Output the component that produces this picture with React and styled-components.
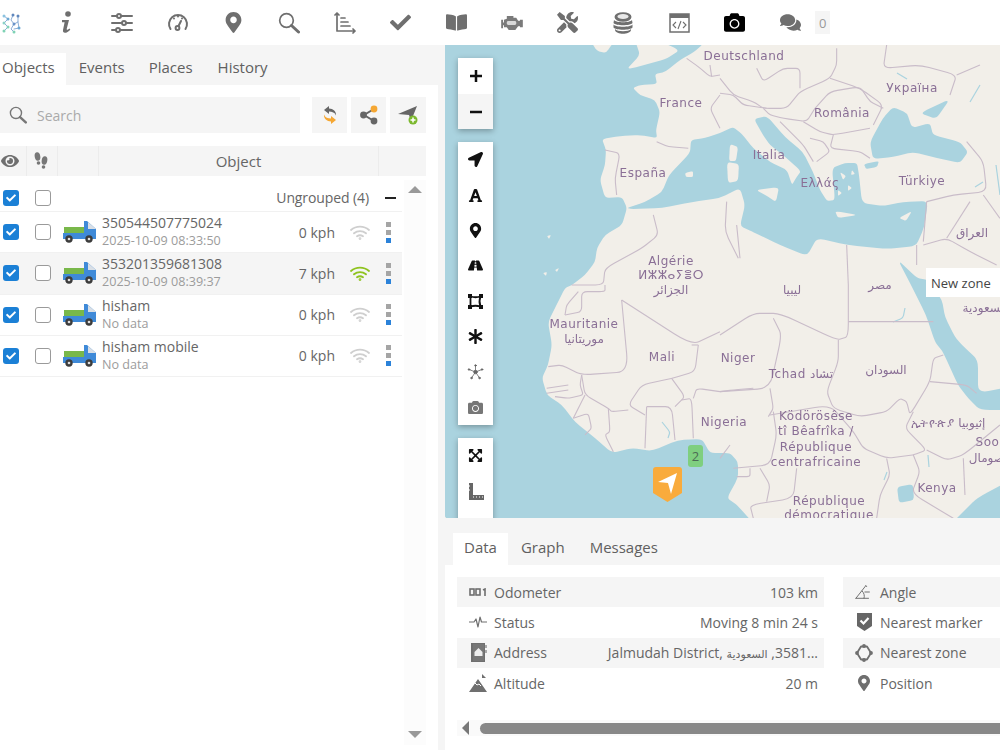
import React from 'react';
import styled, { createGlobalStyle } from 'styled-components';
import {
  FaAsterisk, FaBookOpen, FaCamera, FaCheck, FaComments, FaExpandArrowsAlt, FaEye, FaFont,
  FaLocationArrow, FaMapMarkerAlt, FaRoad, FaTools,
} from 'react-icons/fa';

const GlobalStyle = createGlobalStyle`
  html, body {
    margin: 0;
    height: 750px;
    overflow: hidden;
    background: #fff;
    font-family: "Open Sans", "DejaVu Sans", sans-serif;
    color: #666;
  }
`;

const Toolbar = styled.div`
  height: 45px;
  margin-left: -17px;
  display: flex;
  align-items: center;
  background: #fff;
`;
const ToolIcon = styled.div`
  width: 55.7px;
  height: 45px;
  flex: none;
  display: flex;
  align-items: center;
  justify-content: center;
  color: ${({ $color }) => $color || '#6f6f6f'};
  font-size: 21px;
`;
const Counter = styled.div`
  width: 15px;
  height: 23px;
  margin-left: -3px;
  background: #f5f5f5;
  font-size: 13px;
  color: #999;
  display: flex;
  align-items: center;
  justify-content: center;
`;

const Main = styled.div`
  height: 705px;
  display: flex;
  background: #f5f5f5;
`;
const LeftPanel = styled.div`
  width: 438px;
  margin-right: 7px;
  flex: none;
  background: #fff;
  display: flex;
  flex-direction: column;
  position: relative;
`;
const RightPanel = styled.div`
  width: 555px;
  flex: none;
  display: flex;
  flex-direction: column;
  overflow: hidden;
`;

const TabBar = styled.div`
  display: flex;
  align-items: flex-end;
  background: #f5f5f5;
  height: ${({ $height }) => $height}px;
  padding-left: ${({ $inset }) => $inset}px;
  flex: none;
`;
const Tab = styled.div`
  height: 32px;
  box-sizing: border-box;
  padding: 0 ${({ $pad }) => $pad}px 4px ${({ $pad }) => $pad}px;
  padding-right: ${({ $right, $pad }) => $right ?? $pad}px;
  display: flex;
  align-items: center;
  font-size: 15px;
  color: #606060;
  background: ${({ $active }) => ($active ? '#fff' : 'transparent')};
`;

const SearchRow = styled.div`
  display: flex;
  margin-top: 12px;
  width: 426px;
  height: 36px;
`;
const SearchBox = styled.div`
  width: 300px;
  margin-right: 12px;
  background: #f5f5f5;
  display: flex;
  align-items: center;
  padding-left: 9px;
  box-sizing: border-box;
  font-size: 14px;
  color: #aaa;
  gap: 10px;
`;
const SquareButton = styled.div`
  width: 35px;
  margin-right: 4px;
  background: #f5f5f5;
  display: flex;
  align-items: center;
  justify-content: center;
  &:last-child { margin-right: 0; width: 36px; }
`;

const TableHead = styled.div`
  margin-top: 13px;
  width: 426px;
  height: 30px;
  background: #f5f5f5;
  display: grid;
  grid-template-columns: 27px 31px 41px 280px 47px;
  font-size: 15px;
  color: #666;
`;
const HeadCell = styled.div`
  display: flex;
  align-items: center;
  justify-content: center;
  padding-right: ${({ $nudge }) => $nudge || 0}px;
  border-right: ${({ $last }) => ($last ? 'none' : '1px solid #ececec')};
`;

const ListArea = styled.div`
  position: relative;
  flex: 1;
  width: 426px;
  margin-top: 4px;
`;
const ScrollTrack = styled.div`
  position: absolute;
  right: 0;
  top: 0;
  bottom: 5px;
  width: 22px;
  background: #fcfcfc;
`;
const ArrowGlyph = styled.div`
  position: absolute;
  left: 4px;
  ${({ $down }) => ($down ? 'bottom: 7px;' : 'top: 6px;')}
  width: 0;
  height: 0;
  border-left: 7px solid transparent;
  border-right: 7px solid transparent;
  ${({ $down }) => ($down ? 'border-top: 7px solid #999;' : 'border-bottom: 7px solid #999;')}
`;

const Row = styled.div`
  width: 402px;
  height: ${({ $group }) => ($group ? 32 : 41.25)}px;
  padding-top: ${({ $group }) => ($group ? 4 : 0)}px;
  box-sizing: border-box;
  display: flex;
  align-items: center;
  background: ${({ $shade }) => ($shade ? '#f5f5f5' : '#fff')};
  border-bottom: 1px solid #f1f1f1;
`;
const Check = styled.div`
  width: 16px;
  height: 16px;
  margin-left: ${({ $off }) => ($off ? 16 : 3)}px;
  box-sizing: border-box;
  border-radius: 3px;
  flex: none;
  display: flex;
  align-items: center;
  justify-content: center;
  font-size: 10px;
  color: #fff;
  background: ${({ $off }) => ($off ? '#fff' : '#1b80d6')};
  border: ${({ $off }) => ($off ? '1.5px solid #9a9a9a' : 'none')};
`;
const TruckWrap = styled.div`
  width: 33px;
  height: 22px;
  margin-left: 12px;
  flex: none;
`;
const NameBlock = styled.div`
  margin-left: 6px;
  width: 170px;
  flex: none;
`;
const Name = styled.div`
  font-size: 14px;
  line-height: 17px;
  color: #666;
`;
const Sub = styled.div`
  font-size: 12.6px;
  line-height: 19px;
  color: #9c9c9c;
`;
const Speed = styled.div`
  width: 63px;
  text-align: right;
  font-size: 14px;
  color: #666;
  flex: none;
`;
const WifiWrap = styled.div`
  width: 20px;
  margin-left: 15px;
  flex: none;
  display: flex;
`;
const Dots = styled.div`
  margin-left: 16px;
  display: flex;
  flex-direction: column;
  gap: 3px;
`;
const Dot = styled.span`
  width: 5px;
  height: 5px;
  background: ${({ $blue }) => ($blue ? '#2b82d9' : '#a5a5a5')};
`;
const GroupLabel = styled.div`
  margin-left: auto;
  font-size: 14px;
  color: #666;
  letter-spacing: -0.1px;
`;
const Collapse = styled.div`
  width: 11px;
  height: 2px;
  background: #222;
  margin: 0 6px 0 16px;
`;

const MapArea = styled.div`
  height: 473px;
  flex: none;
  position: relative;
  overflow: hidden;
  background: #aad3df;
`;
const MapSvg = styled.svg`
  display: block;
  width: 555px;
  height: 473px;
  filter: blur(0.45px);
`;
const ControlStack = styled.div`
  position: absolute;
  left: 13px;
  top: 13px;
  display: flex;
  flex-direction: column;
  gap: 13px;
`;
const ControlBox = styled.div`
  width: 35px;
  background: #fff;
  box-shadow: 0 2px 6px rgba(0, 0, 0, 0.3);
  display: flex;
  flex-direction: column;
`;
const ControlBtn = styled.div`
  height: ${({ $h }) => $h || 35.4}px;
  display: flex;
  align-items: center;
  justify-content: center;
  font-size: 15px;
  color: ${({ $muted }) => ($muted ? '#777' : '#111')};
  background: ${({ $shade }) => ($shade ? '#f5f5f5' : '#fff')};
`;
const Tooltip = styled.div`
  position: absolute;
  left: 481px;
  top: 223px;
  width: 80px;
  height: 29px;
  padding-left: 5px;
  background: #fff;
  font-size: 13px;
  color: #444;
  line-height: 30px;
`;
const ClusterBadge = styled.div`
  position: absolute;
  left: 243px;
  top: 400px;
  width: 15px;
  height: 22px;
  border-radius: 3px;
  background: #7fcf7f;
  color: #4c6b55;
  font-size: 13px;
  display: flex;
  align-items: center;
  justify-content: center;
`;
const Marker = styled.svg`
  position: absolute;
  left: 208px;
  top: 422px;
`;

const Details = styled.div`
  flex: 1;
  background: #fff;
  position: relative;
  overflow: hidden;
`;
const DataColumns = styled.div`
  display: flex;
  gap: 19px;
  padding: 12px 0 0 12px;
  width: 800px;
`;
const DataColumn = styled.div`
  width: 367px;
  flex: none;
`;
const DataRow = styled.div`
  height: 30.3px;
  display: flex;
  align-items: center;
  padding: 0 6px 0 12px;
  font-size: 14px;
  color: #666;
  background: ${({ $shade }) => ($shade ? '#f5f5f5' : '#fff')};
`;
const DataIcon = styled.div`
  width: 18px;
  margin-right: 7px;
  display: flex;
  justify-content: center;
  align-items: center;
  font-size: 16px;
  color: #6f6f6f;
  flex: none;
`;
const DataValue = styled.div`
  margin-left: auto;
  white-space: nowrap;
`;
const ArabicPart = styled.bdi`
  font-size: 11px;
`;
const HScroll = styled.div`
  position: absolute;
  left: 12px;
  right: 0;
  top: 202px;
  height: 16px;
  display: flex;
  align-items: center;
  background: #fafafa;
`;
const LeftArrow = styled.div`
  width: 0;
  height: 0;
  margin-left: 5px;
  border-top: 7px solid transparent;
  border-bottom: 7px solid transparent;
  border-right: 7px solid #777;
`;
const Thumb = styled.div`
  flex: 1;
  height: 11px;
  margin-left: 11px;
  border-radius: 6px 0 0 6px;
  background: #888;
`;

const Stroke = ({ w = 22, h = 22, vb = '0 0 22 22', sw = 2, color = '#6f6f6f', children }) => (
  <svg width={w} height={h} viewBox={vb} fill="none" stroke={color} strokeWidth={sw} strokeLinecap="round" strokeLinejoin="round">
    {children}
  </svg>
);

const NetworkLogo = () => (
  <Stroke w={22} h={22} sw={0.9} color="#7fa6d2">
    <path d="M4 4l4 3-4 4 4 4-4 4M13 3l-2 5 3 4-3 5 3 3M18 4v6l-4 2M18 10l1 6-5 1" />
    <g stroke="none">
      <circle cx="4" cy="4" r="1.500" fill="#8cc3e0" /><circle cx="8" cy="7" r="1.500" fill="#6aa6d2" />
      <circle cx="4" cy="11" r="1.500" fill="#8cd0c8" /><circle cx="8" cy="15" r="1.500" fill="#7fcfb8" />
      <circle cx="4" cy="19" r="1.500" fill="#80d2b5" /><circle cx="13" cy="3" r="1.500" fill="#5f87bd" />
      <circle cx="14" cy="12" r="1.500" fill="#6a93c8" /><circle cx="18" cy="4" r="1.500" fill="#5f87bd" />
      <circle cx="19" cy="16" r="1.500" fill="#6aa6d2" /><circle cx="14" cy="20" r="1.500" fill="#80d2b5" />
    </g>
  </Stroke>
);
const ItalicInfo = () => (
  <svg width="13" height="23" viewBox="0 0 13 23" fill="#6f6f6f">
    <circle cx="8" cy="3" r="2.800" />
    <path d="M2 9h7l-2.300 9c-.2 1 .8 1.200 2.800-.5l.8 1.200C7 22.500 2.300 23 3 19l1.600-7.700H2z" />
  </svg>
);
const Sliders = () => (
  <Stroke sw={2}>
    <path d="M1 4h5M10 4h11M1 11h10M15 11h6M1 18h4M9 18h12" />
    <circle cx="8" cy="4" r="2" /><circle cx="13" cy="11" r="2" /><circle cx="7" cy="18" r="2" />
  </Stroke>
);
const Gauge = () => (
  <Stroke sw={2}>
    <path d="M3.500 17a9 9 0 1 1 15 0" />
    <path d="M7 6.500v0M15 6.500v0M11 4.500v0" />
    <circle cx="10.500" cy="16" r="1.900" />
    <path d="M11.500 14l2.500-5" />
  </Stroke>
);
const Magnifier = ({ size = 22, color = '#6f6f6f' }) => (
  <Stroke w={size} h={size} color={color} sw={1.700}>
    <circle cx="8.500" cy="8.500" r="6.800" />
    <path d="M13.500 13.500l7 6.500" strokeWidth="3" />
  </Stroke>
);
const AxisChart = () => (
  <Stroke sw={1.700}>
    <path d="M3 1v18h18M1 3l2-2 2 2M19 17l2 2-2 2M7 6h4M7 10h7M7 14h9" />
  </Stroke>
);
const Engine = () => (
  <svg width="22" height="16" viewBox="0 0 23 17">
    <path fill="#7a7a7a" d="M6 1h7v2h3l2 3h2V5h3v8h-3v-1h-2l-3 4H8l-2-3H3v-2H2v3H0V5h2v3h1V5l3-1z" />
    <rect x="6" y="6.500" width="10" height="4" rx="1.500" fill="#d8d8d8" />
  </svg>
);
const Coins = () => (
  <svg width="20" height="22" viewBox="0 0 20 22">
    <ellipse cx="10" cy="5" rx="8.500" ry="4.800" fill="#6f6f6f" />
    <ellipse cx="10" cy="4.500" rx="5.500" ry="2.600" fill="#e8e8e8" />
    <path fill="#6f6f6f" d="M1 8c2 3 16 3 18 0l.5 3c-2 3-17 3-19 0zM.5 12.500c2 3 17 3 19 0v3c-2 3-17 3-19 0zM2 17c2 3 14 3 16 0v1c-1 5-15 5-16 0z" />
  </svg>
);
const CodeWindow = () => (
  <svg width="21" height="20" viewBox="0 0 21 20">
    <rect x="1" y="1" width="19" height="18" fill="#fff" stroke="#6f6f6f" strokeWidth="1.500" />
    <rect x="1" y="1" width="19" height="4" fill="#6f6f6f" />
    <path d="M7 9l-3 3 3 3M14 9l3 3-3 3M12 8l-3 8" fill="none" stroke="#6f6f6f" strokeWidth="1.100" />
  </svg>
);
const SyncIcon = () => (
  <svg width="18" height="20" viewBox="0 0 18 20">
    <path d="M8 1L3 5l5 4V6.500c3 0 6 1 7 4 .5-4-3-7-7-7z" fill="#666" />
    <path d="M10 19l5-4-5-4v2.500c-3 0-6-1-7-4-.5 4 3 7 7 7z" fill="#f5a733" />
  </svg>
);
const ShareIcon = () => (
  <svg width="20" height="20" viewBox="0 0 20 20">
    <path d="M15 4L5 10l10 6" fill="none" stroke="#666" strokeWidth="2" />
    <circle cx="15" cy="4" r="3.400" fill="#f5a733" />
    <circle cx="4.500" cy="10" r="3.400" fill="#666" />
    <circle cx="15" cy="16" r="3.400" fill="#666" />
  </svg>
);
const AddPlane = () => (
  <svg width="21" height="20" viewBox="0 0 21 20">
    <path d="M0 9L19 1l-6 15-2-6z" fill="#666" />
    <circle cx="15" cy="15" r="4.500" fill="#7cb82f" />
    <path d="M12.500 15h5M15 12.500v5" stroke="#fff" strokeWidth="1.500" />
  </svg>
);
const FootPrints = () => (
  <svg width="16" height="21" viewBox="0 0 16 20" fill="#777">
    <ellipse cx="4.500" cy="5" rx="2.800" ry="4.200" transform="rotate(-10 4.500 5)" />
    <ellipse cx="5.500" cy="11.500" rx="1.800" ry="1.700" />
    <ellipse cx="11.500" cy="9" rx="2.800" ry="4.200" transform="rotate(10 11.500 9)" />
    <ellipse cx="10.500" cy="15.500" rx="1.800" ry="1.800" />
  </svg>
);
const Truck = () => (
  <svg width="33" height="22" viewBox="0 0 33 22">
    <rect x="1" y="6" width="20" height="7" fill="#79b84a" />
    <path d="M0 12h21V0h3l9 8v10H0z" fill="#3f8ad8" />
    <path d="M25 1l8 7h-8z" fill="#d9dfe6" />
    <circle cx="6" cy="18" r="3.700" fill="#3c3c3c" /><circle cx="6" cy="18" r="1.300" fill="#ddd" />
    <circle cx="26" cy="18" r="3.700" fill="#3c3c3c" /><circle cx="26" cy="18" r="1.300" fill="#ddd" />
  </svg>
);
const Wifi = ({ on }) => (
  <Stroke w={20} h={15} vb="0 0 20 15" color={on ? '#8fc31f' : '#cfcfcf'} sw={1.800}>
    <path d="M1 5c5-4.500 13-4.500 18 0M4 8.300c3.500-3 8.500-3 12 0M7 11.300c1.800-1.300 4.200-1.300 6 0" />
    <circle cx="10" cy="13.600" r=".5" />
  </Stroke>
);

const ZoneIcon = () => (
  <svg width="15" height="15" viewBox="0 0 15 15">
    <path d="M2.500 2.500Q7.500 4 12.500 2.500Q10.500 7.500 12.500 12.500Q7.500 11 2.500 12.500z" fill="none" stroke="#111" strokeWidth="1.800" />
    <path d="M0 0h4v4H0zM11 0h4v4h-4zM0 11h4v4H0zM11 11h4v4h-4z" fill="#111" />
  </svg>
);
const ClusterIcon = () => (
  <Stroke w={17} h={16} vb="0 0 17 16" color="#666" sw={0.800}>
    <path d="M8.500 8V1.500M8.500 8L2 5.500M8.500 8L15 5.500M8.500 8l-4 6M8.500 8l4 6" />
    <g fill="#666">
      <circle cx="8.500" cy="8" r="1.800" /><circle cx="8.500" cy="1.500" r=".8" /><circle cx="2" cy="5.500" r=".8" />
      <circle cx="15" cy="5.500" r=".8" /><circle cx="4.500" cy="14" r=".8" /><circle cx="12.500" cy="14" r=".8" />
    </g>
  </Stroke>
);
const RulerIcon = () => (
  <svg width="16" height="17" viewBox="0 0 16 17">
    <path d="M1 0h4v12h11v5H1z" fill="#666" />
    <path d="M5 14h10M1 3h3M1 7h3" stroke="#fff" strokeWidth="1" strokeDasharray="1 2" />
  </svg>
);

const DigitsIcon = () => (
  <svg width="18" height="8" viewBox="0 0 18 8" fill="none" stroke="#6f6f6f" strokeWidth="1.600">
    <rect x="1" y="1" width="4" height="6" /><rect x="7" y="1" width="4" height="6" /><path d="M14 2l2-1v7" />
  </svg>
);
const PulseIcon = () => (
  <Stroke w={18} h={14} vb="0 0 18 14" sw={1.200}>
    <path d="M0 7h5l2-3 2 8 2-10 1.500 5H18" />
  </Stroke>
);
const AddressIcon = () => (
  <svg width="17" height="21" viewBox="0 0 17 21">
    <rect x="1" y="1" width="14" height="19" fill="#6f6f6f" />
    <rect x="3" y="2" width="11" height="17" fill="#777" />
    <path d="M8.500 6l4 4v4h-8v-4z" fill="#eee" />
    <path d="M15 3h2v3h-2zM15 8h2v3h-2z" fill="#aaa" />
  </svg>
);
const PeakIcon = () => (
  <svg width="18" height="18" viewBox="0 0 18 18">
    <path d="M9 5L0 18h18zM13 0v4h4z" fill="#6f6f6f" />
    <path d="M6 9l2 2 2-1 2 2" stroke="#fff" fill="none" />
  </svg>
);
const AngleIcon = () => (
  <Stroke w={20} h={18} vb="0 0 20 18" sw={1.100}>
    <path d="M1 16L12 2M1 16h14M8 8c2 2 3 5 2 8M12 2l1 1M11 9h5" />
  </Stroke>
);
const ShieldCheck = () => (
  <svg width="15" height="18" viewBox="0 0 15 18">
    <path d="M0 0h15v13l-7.500 5L0 13z" fill="#666" />
    <path d="M3.500 7.500l3 3 5-5.500" fill="none" stroke="#fff" strokeWidth="2.200" />
  </svg>
);
const ZoneRing = () => (
  <Stroke w={18} h={18} vb="0 0 18 18" sw={1.800}>
    <path d="M6 2.500h6l4 6.500-4 6.500H6L2 9z" />
    <g fill="#6f6f6f"><circle cx="9" cy="2" r="1" /><circle cx="9" cy="16" r="1" /><circle cx="2" cy="9" r="1" /><circle cx="16" cy="9" r="1" /></g>
  </Stroke>
);

/* rounds only the tip of each corner, so thin peninsulas keep their shape */
const smoothPath = (points, closed) => {
  const n = points.trim().split(/\s+/).map(Number);
  const pts = [];
  for (let i = 0; i < n.length; i += 2) pts.push([n[i], n[i + 1]]);
  const along = (a, b, t) => `${a[0] + (b[0] - a[0]) * t} ${a[1] + (b[1] - a[1]) * t}`;
  const count = pts.length;
  if (closed) {
    let d = `M${along(pts[count - 1], pts[0], 0.75)}`;
    pts.forEach((p, i) => {
      const next = pts[(i + 1) % count];
      d += `Q${p[0]} ${p[1]} ${along(p, next, 0.25)}L${along(p, next, 0.75)}`;
    });
    return `${d}Z`;
  }
  let d = `M${pts[0][0]} ${pts[0][1]}`;
  for (let i = 1; i < count - 1; i += 1) {
    d += `L${along(pts[i - 1], pts[i], 0.75)}Q${pts[i][0]} ${pts[i][1]} ${along(pts[i], pts[i + 1], 0.25)}`;
  }
  return `${d}L${pts[count - 1][0]} ${pts[count - 1][1]}`;
};

/* map water, page coordinates (viewBox starts at 445,45) */
const WATER = [
  '420 20 720 20 702 45 694 52 680 60 665 72 655 74 657 84 640 85 633 88 640 95 655 100 660 112 656 130 657 138 640 135 620 136 602 139 606 150 605 165 600 180 605 198 622 197 627 208 622 225 605 235 597 248 595 262 585 275 572 285 565 288 558 302 548 322 552 345 548 365 542 378 547 395 562 405 575 422 595 438 612 453 632 448 652 451 678 440 702 439 710 453 730 453 738 462 738 478 727 498 737 505 755 525 420 545',
  '627 208 645 202 662 192 669 175 690 153 691 140 705 138 720 133 733 127 742 134 753 148 770 162 787 170 792 185 796 178 801 171 783 155 770 145 763 135 754 119 767 116 785 137 803 152 813 172 820 190 827 201 835 200 832 168 845 163 857 163 859 175 862 203 883 206 903 202 928 201 924 228 916 246 887 249 847 245 817 238 807 256 780 245 753 232 740 226 745 205 740 188 720 198 692 202 662 208 632 209',
  '870 142 883 118 893 107 907 113 912 128 930 123 933 135 960 142 968 152 960 163 937 158 913 152 893 157 873 159',
  '920 113 950 99 936 119',
  '864 164 879 161 877 167 866 169',
  '898 260 917 278 928 280 942 300 945 317 955 337 962 345 978 360 978 393 1020 385 1020 410 980 410 968 398 958 385 943 352 935 342 926 315 911 285',
  '1020 475 977 498 960 515 945 530 1020 530',
  '897 487 913 484 914 500 899 503',
];
const LAND = [
  '590 40 615 40 606 53 597 51',
  '645 35 680 50 666 59 626 70 640 55 635 40',
  '730 144 738 147 736 161 729 161',
  '727 162 739 164 738 181 728 183',
  '756 190 779 187 776 202 767 196',
  '835 211 858 215 838 218',
  '899 218 912 211 906 221',
  '685 173 693 171 693 177 686 177',
  '840 172 846 176 843 180', '848 185 852 188 848 191', '838 190 842 193 838 196', '852 170 855 174 851 175',
  '547 236 551 235 549 239', '543 273 547 272 546 276', '555 270 559 268 557 272',
];
const WATER_LINES = [
  '897 73 907 79', '970 102 980 85', '975 187 983 182', '996 165 1000 195',
  '893 322 903 318 905 308', '928 455 929 467', '887 472 884 480', '662 422 670 432 668 438',
];

/* borders traced per 3x tile: [originX, originY, polylines] */
const BORDERS = [
  [445, 45, [
    '480 315 525 325 510 400 515 450', '635 290 670 305 730 310', '825 150 795 190 825 250',
    '725 40 760 65 795 95 825 90', '795 60 800 95', '625 510 640 570 590 610 480 670 475 720 380 720',
  ]],
  [720, 45, [
    '0 100 40 150 100 170 130 190 200 190 240 140 330 100 350 60 350 10', '110 70 130 110 190 70 240 70 240 130',
    '330 100 420 130 490 180 460 240', '500 0 490 70 600 60 710 90 690 150', '285 190 330 140 420 125 450 170 490 190',
    '250 230 300 260 340 270 450 250', '340 270 330 310 420 320 450 340', '180 230 250 300 280 350',
    '270 280 310 290 330 320 290 350', '130 190 150 210 190 220 260 230 285 190', '0 145 40 150 70 180 140 190',
    '620 470 700 450 800 440 790 350 740 290', '620 470 610 590', '680 580 750 470', '610 600 680 580 750 620 830 660',
    '380 600 385 720', '50 540 60 640', '20 470 15 560 55 640', '590 600 590 660', '790 450 840 520', '710 90 780 60',
  ]],
  [445, 285, [
    '530 45 740 180 825 140', '530 45 550 260 410 270 350 240 310 245', '360 90 410 80 410 20 480 20 480 0', '360 90 365 60 400 20',
    '760 180 750 260 680 280 590 300 550 360 600 390', '410 270 420 330 490 370 500 380 550 375', '305 310 370 300', '305 325 370 315',
    '410 270 405 300 415 330 370 340 330 335', '385 400 430 385 440 430 420 450', '490 370 495 440 480 450 505 500',
    '605 365 600 490', '605 365 680 365 690 465', '710 345 740 340 745 460', '680 280 720 335 690 365', '745 340 755 310 825 320',
    '740 180 760 180', '420 330 385 400',
  ]],
  [720, 285, [
    '0 150 100 85 180 85 350 165 385 155 385 0', '385 110 640 110', '160 100 185 150 150 310 0 320', '355 165 355 230 320 320 340 370 420 395 500 380 540 340 560 350 570 390 630 290 640 220 670 210',
    '630 290 740 300 770 325', '150 310 160 370 145 395', '150 390 330 360 400 440 430 490 500 520 580 510 620 495 555 430 580 380',
    '620 495 680 525 730 510 840 420', '160 380 170 450 150 540 40 550', '230 550 220 640 90 660 100 700', '500 520 510 570 480 630 470 700',
    '580 510 600 560 575 625 700 700', '730 520 735 630', '50 575 90 575 90 550', '120 550 150 600 140 650', '0 320 40 315 100 310', '30 480 0 520',
  ]],
];
const LABELS = [
  ['Deutschland', 744, 60], ['France', 681, 107], ['España', 643, 177], ['Italia', 769, 159], ['România', 842, 117],
  ['Україна', 912, 92], ['Ελλάς', 820, 187], ['Türkiye', 922, 185], ['العراق', 972, 237], ['Algérie', 671, 265],
  ['ⵍⵣⵣⴰⵢⴻⵔ', 671, 279], ['الجزائر', 671, 294], ['ليبيا', 792, 294], ['مصر', 880, 289], ['السعودية', 985, 312],
  ['Mauritanie', 584, 328], ['موريتانيا', 584, 343], ['Mali', 662, 361], ['Niger', 738, 362], ['Tchad تشاد', 801, 378],
  ['السودان', 886, 374], ['Nigeria', 724, 426], ['Ködörösêse', 816, 420], ['tî Bêafrîka /', 816, 435], ['République', 816, 451],
  ['centrafricaine', 816, 466], ['ኢትዮጵያ إثيوبيا', 948, 427], ['Soomaaliya', 1013, 446], ['الصومال', 990, 462], ['Kenya', 937, 492],
  ['République', 829, 505], ['démocratique', 829, 519],
];

const WorldMap = () => (
  <MapSvg viewBox="445 45 555 473">
    <rect x="445" y="45" width="555" height="473" fill="#f2efe9" />
    {WATER.map((d) => <path key={d} d={smoothPath(d, true)} fill="#aad3df" />)}
    {LAND.map((d) => <path key={d} d={smoothPath(d, true)} fill="#f2efe9" />)}
    {WATER_LINES.map((d) => <path key={d} d={smoothPath(d, false)} fill="none" stroke="#aad3df" strokeWidth="1.200" />)}
    {BORDERS.map(([x, y, lines]) => (
      <g key={`${x}-${y}`} transform={`translate(${x} ${y}) scale(0.3333)`} fill="none" stroke="#c9bcc9" strokeWidth="3.300" strokeLinejoin="round">
        {lines.map((points) => <path key={points} d={smoothPath(points, false)} />)}
      </g>
    ))}
    {LABELS.map(([text, x, y]) => (
      <text key={`${text}-${x}`} x={x} y={y} textAnchor="middle" fontFamily='"DejaVu Sans", sans-serif' fontSize="12" fill="#8a6f96" letterSpacing="0.500">
        {text}
      </text>
    ))}
  </MapSvg>
);

const OBJECTS = [
  { name: '350544507775024', sub: '2025-10-09 08:33:50', speed: '0 kph' },
  { name: '353201359681308', sub: '2025-10-09 08:39:37', speed: '7 kph', on: true },
  { name: 'hisham', sub: 'No data', speed: '0 kph' },
  { name: 'hisham mobile', sub: 'No data', speed: '0 kph' },
];

const ObjectRow = ({ name, sub, speed, on }) => (
  <Row $shade={on}>
    <Check><FaCheck /></Check>
    <Check $off />
    <TruckWrap><Truck /></TruckWrap>
    <NameBlock>
      <Name>{name}</Name>
      <Sub>{sub}</Sub>
    </NameBlock>
    <Speed>{speed}</Speed>
    <WifiWrap><Wifi on={on} /></WifiWrap>
    <Dots><Dot /><Dot /><Dot $blue /></Dots>
  </Row>
);

export default function App() {
  return (
    <>
      <GlobalStyle />
      <Toolbar>
        <ToolIcon><NetworkLogo /></ToolIcon>
        <ToolIcon><ItalicInfo /></ToolIcon>
        <ToolIcon><Sliders /></ToolIcon>
        <ToolIcon><Gauge /></ToolIcon>
        <ToolIcon><FaMapMarkerAlt /></ToolIcon>
        <ToolIcon><Magnifier /></ToolIcon>
        <ToolIcon><AxisChart /></ToolIcon>
        <ToolIcon><FaCheck /></ToolIcon>
        <ToolIcon><FaBookOpen /></ToolIcon>
        <ToolIcon><Engine /></ToolIcon>
        <ToolIcon><FaTools /></ToolIcon>
        <ToolIcon><Coins /></ToolIcon>
        <ToolIcon><CodeWindow /></ToolIcon>
        <ToolIcon $color="#000"><FaCamera /></ToolIcon>
        <ToolIcon><FaComments /></ToolIcon>
        <Counter>0</Counter>
      </Toolbar>
      <Main>
        <LeftPanel>
          <TabBar $height={40} $inset={0}>
            <Tab $active $pad={2} $right={11}>Objects</Tab>
            <Tab $pad={13}>Events</Tab>
            <Tab $pad={11}>Places</Tab>
            <Tab $pad={14}>History</Tab>
          </TabBar>
          <SearchRow>
            <SearchBox><Magnifier size={18} color="#777" />Search</SearchBox>
            <SquareButton><SyncIcon /></SquareButton>
            <SquareButton><ShareIcon /></SquareButton>
            <SquareButton><AddPlane /></SquareButton>
          </SearchRow>
          <TableHead>
            <HeadCell $nudge={6}><FaEye color="#6f6f6f" size={18} /></HeadCell>
            <HeadCell $nudge={2}><FootPrints /></HeadCell>
            <HeadCell />
            <HeadCell>Object</HeadCell>
            <HeadCell $last />
          </TableHead>
          <ListArea>
            <ScrollTrack>
              <ArrowGlyph />
              <ArrowGlyph $down />
            </ScrollTrack>
            <Row $group>
              <Check><FaCheck /></Check>
              <Check $off />
              <GroupLabel>Ungrouped (4)</GroupLabel>
              <Collapse />
            </Row>
            {OBJECTS.map((item) => <ObjectRow key={item.name} {...item} />)}
          </ListArea>
        </LeftPanel>
        <RightPanel>
          <MapArea>
            <WorldMap />
            <ControlStack>
              <ControlBox>
                <ControlBtn $h={36}><svg width="14" height="14" viewBox="0 0 14 14"><path d="M7 1v12M1 7h12" stroke="#111" strokeWidth="2.500" /></svg></ControlBtn>
                <ControlBtn $h={35} $shade><svg width="14" height="14" viewBox="0 0 14 14"><path d="M1 7h12" stroke="#111" strokeWidth="2.500" /></svg></ControlBtn>
              </ControlBox>
              <ControlBox>
                <ControlBtn><FaLocationArrow /></ControlBtn>
                <ControlBtn><FaFont /></ControlBtn>
                <ControlBtn><FaMapMarkerAlt /></ControlBtn>
                <ControlBtn><FaRoad /></ControlBtn>
                <ControlBtn><ZoneIcon /></ControlBtn>
                <ControlBtn><FaAsterisk /></ControlBtn>
                <ControlBtn><ClusterIcon /></ControlBtn>
                <ControlBtn $muted><FaCamera /></ControlBtn>
              </ControlBox>
              <ControlBox>
                <ControlBtn><FaExpandArrowsAlt /></ControlBtn>
                <ControlBtn><RulerIcon /></ControlBtn>
                <ControlBtn />
              </ControlBox>
            </ControlStack>
            <Tooltip>New zone</Tooltip>
            <ClusterBadge>2</ClusterBadge>
            <Marker width="29" height="35" viewBox="0 0 29 35">
              <path d="M3 0h23a3 3 0 0 1 3 3v23l-14.500 9L0 26V3a3 3 0 0 1 3-3z" fill="#f9ab3c" />
              <path d="M5 15L24 6l-6 21-3-11z" fill="#fff" />
            </Marker>
          </MapArea>
          <Details>
            <TabBar $height={47} $inset={8}>
              <Tab $active $pad={11}>Data</Tab>
              <Tab $pad={13}>Graph</Tab>
              <Tab $pad={12}>Messages</Tab>
            </TabBar>
            <DataColumns>
              <DataColumn>
                <DataRow $shade><DataIcon><DigitsIcon /></DataIcon>Odometer<DataValue>103 km</DataValue></DataRow>
                <DataRow><DataIcon><PulseIcon /></DataIcon>Status<DataValue>Moving 8 min 24 s</DataValue></DataRow>
                <DataRow $shade>
                  <DataIcon><AddressIcon /></DataIcon>Address
                  <DataValue>Jalmudah District, <ArabicPart>السعودية</ArabicPart> ,3581...</DataValue>
                </DataRow>
                <DataRow><DataIcon><PeakIcon /></DataIcon>Altitude<DataValue>20 m</DataValue></DataRow>
              </DataColumn>
              <DataColumn>
                <DataRow $shade><DataIcon><AngleIcon /></DataIcon>Angle</DataRow>
                <DataRow><DataIcon><ShieldCheck /></DataIcon>Nearest marker</DataRow>
                <DataRow $shade><DataIcon><ZoneRing /></DataIcon>Nearest zone</DataRow>
                <DataRow><DataIcon><FaMapMarkerAlt /></DataIcon>Position</DataRow>
              </DataColumn>
            </DataColumns>
            <HScroll>
              <LeftArrow />
              <Thumb />
            </HScroll>
          </Details>
        </RightPanel>
      </Main>
    </>
  );
}
